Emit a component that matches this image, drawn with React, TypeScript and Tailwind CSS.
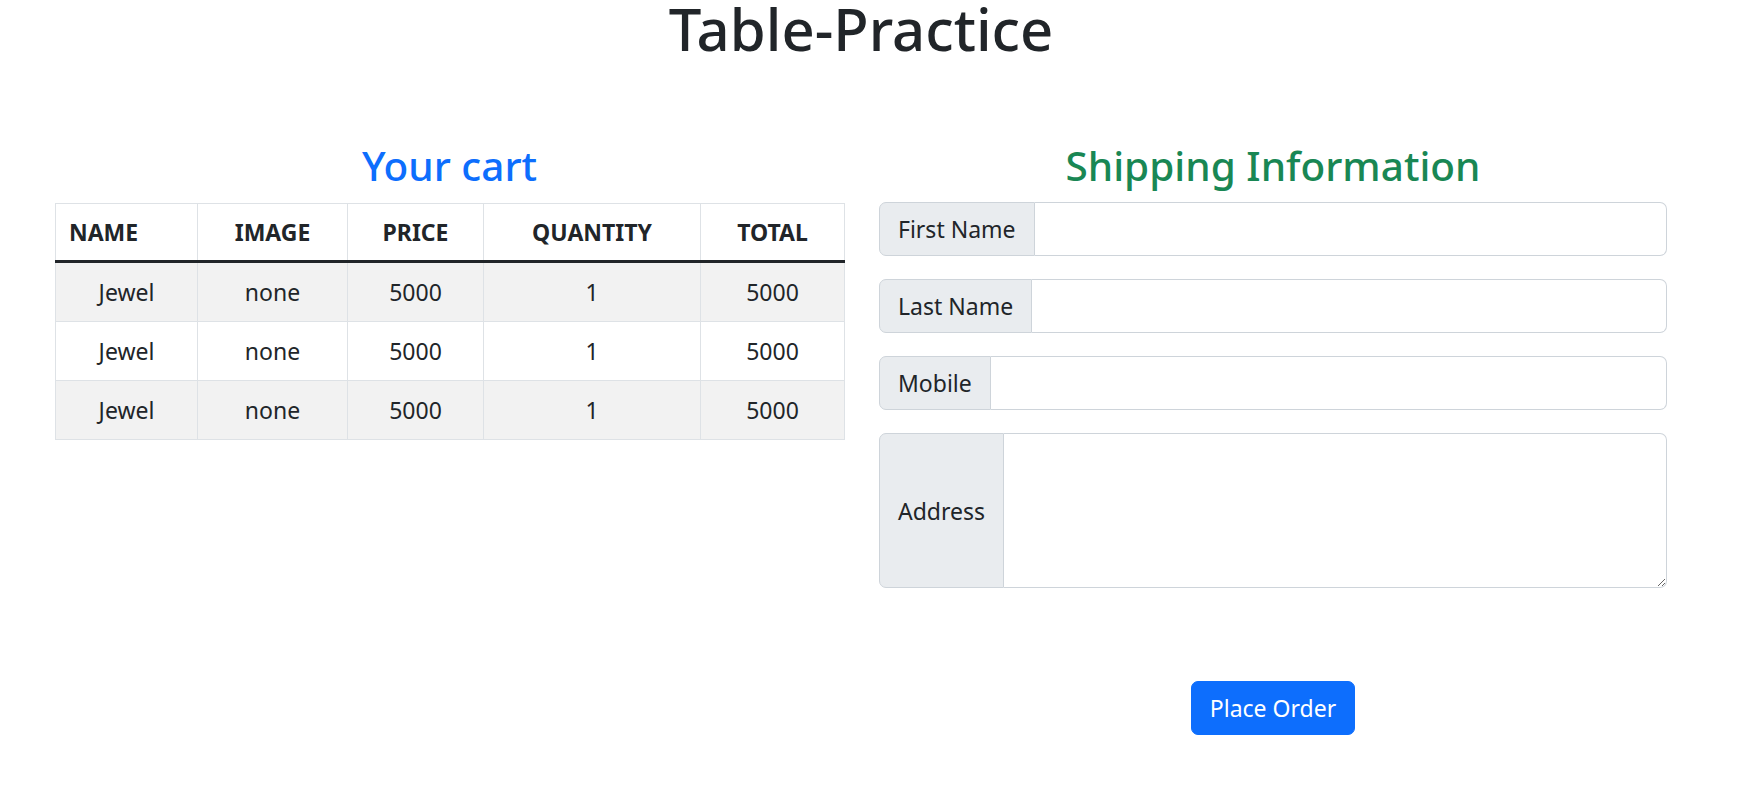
import React from "react";

const rows = [
	{ name: "Jewel", image: "none", price: 5000, quantity: 1, total: 5000 },
	{ name: "Jewel", image: "none", price: 5000, quantity: 1, total: 5000 },
	{ name: "Jewel", image: "none", price: 5000, quantity: 1, total: 5000 },
];

const fields = ["First Name", "Last Name", "Mobile"];

const App = () => {
	return (
		<div className="w-[1722px] px-[55px] font-['Noto_Sans',sans-serif] text-[#212529] bg-white min-h-screen">
			<h1 className="text-center text-[58px] leading-[58px] font-medium">Table-Practice</h1>
			<div className="mt-[83px] flex gap-[35px]">
				<div className="w-[789px]">
					<h3 className="text-center text-[40.5px] leading-[50px] font-medium text-[#0d6efd] mb-[12px]">
						Your cart
					</h3>
					<table className="w-full table-fixed border-collapse text-[23px] leading-[36px]">
						<thead>
							<tr className="border border-[#dee2e6]">
								<th className="w-[142px] border-x border-[#dee2e6] border-b-[3px] border-b-[#212529] px-[13px] py-[10px] text-left font-bold">
									NAME
								</th>
								<th className="w-[150px] border-x border-[#dee2e6] border-b-[3px] border-b-[#212529] px-[12px] py-[10px] text-center font-bold">
									IMAGE
								</th>
								<th className="w-[136px] border-x border-[#dee2e6] border-b-[3px] border-b-[#212529] px-[12px] py-[10px] text-center font-bold">
									PRICE
								</th>
								<th className="w-[217px] border-x border-[#dee2e6] border-b-[3px] border-b-[#212529] px-[12px] py-[10px] text-center font-bold">
									QUANTITY
								</th>
								<th className="w-[144px] border-x border-[#dee2e6] border-b-[3px] border-b-[#212529] px-[12px] py-[10px] text-center font-bold">
									TOTAL
								</th>
							</tr>
						</thead>
						<tbody>
							{rows.map((r, i) => (
								<tr key={i} className={i % 2 === 0 ? "bg-[#f2f2f2]" : "bg-white"}>
									<td className="border border-[#dee2e6] px-[12px] py-[11px] text-center">{r.name}</td>
									<td className="border border-[#dee2e6] px-[12px] py-[11px] text-center">{r.image}</td>
									<td className="border border-[#dee2e6] px-[12px] py-[11px] text-center">{r.price}</td>
									<td className="border border-[#dee2e6] px-[12px] py-[11px] text-center">{r.quantity}</td>
									<td className="border border-[#dee2e6] px-[12px] py-[11px] text-center">{r.total}</td>
								</tr>
							))}
						</tbody>
					</table>
				</div>
				<div className="w-[788px]">
					<h3 className="text-center text-[40.5px] leading-[50px] font-medium text-[#198754] mb-[11px]">
						Shipping Information
					</h3>
					{fields.map((f) => (
						<div key={f} className="flex mb-[23px] text-[23px] leading-[36px]">
							<span className="px-[18px] py-[8px] bg-[#e9ecef] border border-[#ced4da] rounded-l-[7px] whitespace-nowrap">
								{f}
							</span>
							<input
								type="text"
								className="flex-1 min-w-0 px-[18px] py-[8px] border border-l-0 border-[#ced4da] rounded-r-[7px] bg-white outline-none"
							/>
						</div>
					))}
					<div className="flex h-[155px] text-[23px] leading-[36px]">
						<span className="flex items-center px-[18px] bg-[#e9ecef] border border-[#ced4da] rounded-l-[7px]">
							Address
						</span>
						<textarea className="flex-1 min-w-0 px-[18px] py-[8px] border border-l-0 border-[#ced4da] rounded-r-[7px] bg-white outline-none" />
					</div>
					<div className="flex justify-center mt-[93px]">
						<button className="px-[18px] py-[8px] text-[23px] leading-[36px] text-white bg-[#0d6efd] border border-[#0d6efd] rounded-[7px]">
							Place Order
						</button>
					</div>
				</div>
			</div>
		</div>
	);
};

export default App;
